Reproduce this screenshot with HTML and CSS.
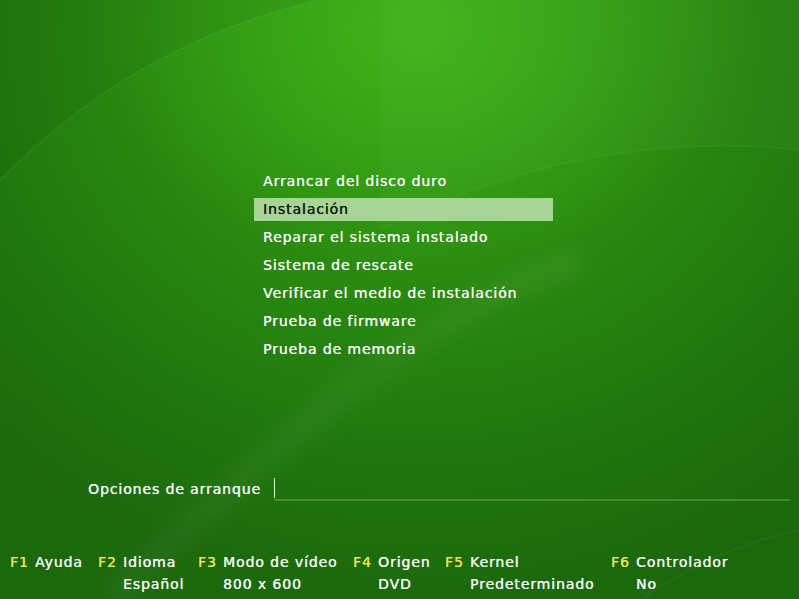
FILE: index.html
```html
<!DOCTYPE html>
<html lang="es">
    <head>
        <meta charset="utf-8">
        <title>Arranque</title>
        <link rel="stylesheet" href="styles.css">
    </head>
    <body>
        <div class="screen">
            <!-- fondo: curvas suaves -->
            <svg class="swoosh" width="799" height="599" viewBox="0 0 799 599">
                <defs>
                    <filter id="soft"><feGaussianBlur stdDeviation="8"/></filter>
                </defs>
                <path d="M0 180 C 90 90, 190 30, 320 0 L0 0 Z" fill="rgba(0,0,0,0.05)"/>
                <path d="M0 180 C 90 90, 190 30, 320 0" fill="none" stroke="rgba(255,255,255,0.05)" stroke-width="2"/>
                <path d="M110 599 C 250 470, 420 310, 580 260" fill="none" stroke="rgba(255,255,255,0.035)" stroke-width="30" filter="url(#soft)"/>
                <path d="M380 230 C 520 160, 660 135, 799 150 L799 0 L380 0 Z" fill="rgba(255,255,255,0.025)"/>
                <path d="M380 230 C 520 160, 660 135, 799 150" fill="none" stroke="rgba(255,255,255,0.04)" stroke-width="2"/>
                <path d="M640 599 C 700 560, 750 540, 799 530" fill="none" stroke="rgba(255,255,255,0.04)" stroke-width="2"/>
            </svg>

            <ul class="menu">
                <li class="menu-item">Arrancar del disco duro</li>
                <li class="menu-item selected">Instalación</li>
                <li class="menu-item">Reparar el sistema instalado</li>
                <li class="menu-item">Sistema de rescate</li>
                <li class="menu-item">Verificar el medio de instalación</li>
                <li class="menu-item">Prueba de firmware</li>
                <li class="menu-item">Prueba de memoria</li>
            </ul>

            <div class="options">
                <span class="options-label">Opciones de arranque</span>
                <div class="options-field"><span class="caret"></span></div>
            </div>

            <div class="fkeys">
                <div class="fkey"><span class="key">F1</span><span class="name">Ayuda</span></div>
                <div class="fkey"><span class="key">F2</span><span class="name">Idioma</span><span class="value">Español</span></div>
                <div class="fkey"><span class="key">F3</span><span class="name">Modo de vídeo</span><span class="value">800 x 600</span></div>
                <div class="fkey"><span class="key">F4</span><span class="name">Origen</span><span class="value">DVD</span></div>
                <div class="fkey"><span class="key">F5</span><span class="name">Kernel</span><span class="value">Predeterminado</span></div>
                <div class="fkey"><span class="key">F6</span><span class="name">Controlador</span><span class="value">No</span></div>
            </div>
        </div>
    </body>
</html>
```

FILE: styles.css
```css
html, body {
    margin: 0;
    padding: 0;
    height: 100%;
}
body {
    background: #1d6a0c;
    overflow: hidden;
}
ul, li, div, span {
    box-sizing: border-box;
    margin: 0;
    padding: 0;
}
.screen {
    position: relative;
    width: 799px;
    height: 599px;
    display: flex;
    flex-direction: column;
    font-family: "DejaVu Sans", Verdana, sans-serif;
    font-size: 14px;
    letter-spacing: 0.9px;
    color: #f2f6ee;
    text-shadow: 0.3px 0 0 currentColor;
    background:
        radial-gradient(ellipse 330px 260px at 420px 10px, rgba(70, 190, 30, 0.55), rgba(70, 190, 30, 0) 100%),
        radial-gradient(ellipse 620px 560px at 420px 40px, #37a614 0%, #2b8c10 40%, #217a0e 70%, #1c680c 100%);
}
.swoosh {
    position: absolute;
    left: 0;
    top: 0;
    z-index: 0;
}
.menu, .options, .fkeys {
    position: relative;
    z-index: 1;
}

/* menu de arranque */
.menu {
    list-style: none;
    margin: 170px 0 0 254px;
    width: 299px;
    display: flex;
    flex-direction: column;
    gap: 5px;
}
.menu-item {
    height: 23px;
    line-height: 23px;
    padding-left: 9px;
    white-space: nowrap;
}
.menu-item.selected {
    background: #a9d497;
    color: #0c1a08;
}

/* opciones */
.options {
    margin-top: 117px;
    padding-left: 88px;
    display: flex;
    height: 22px;
}
.options-label {
    width: 186px;
    line-height: 22px;
    white-space: nowrap;
}
.options-field {
    flex: 1;
    margin-right: 9px;
    border-bottom: 2px solid rgba(150, 210, 120, 0.3);
    height: 23px;
}
.caret {
    display: block;
    width: 1px;
    height: 20px;
    background: #e8f0e0;
}

/* teclas de funcion */
.fkeys {
    margin-top: 51px;
    padding-left: 10px;
    display: grid;
    grid-template-columns: 88px 100px 155px 92px 166px auto;
}
.fkey {
    display: grid;
    grid-template-columns: 25px auto;
    grid-auto-rows: 22px;
    line-height: 22px;
    white-space: nowrap;
}
.key {
    color: #e6e45c;
}
.value {
    grid-column: 2;
}
```
